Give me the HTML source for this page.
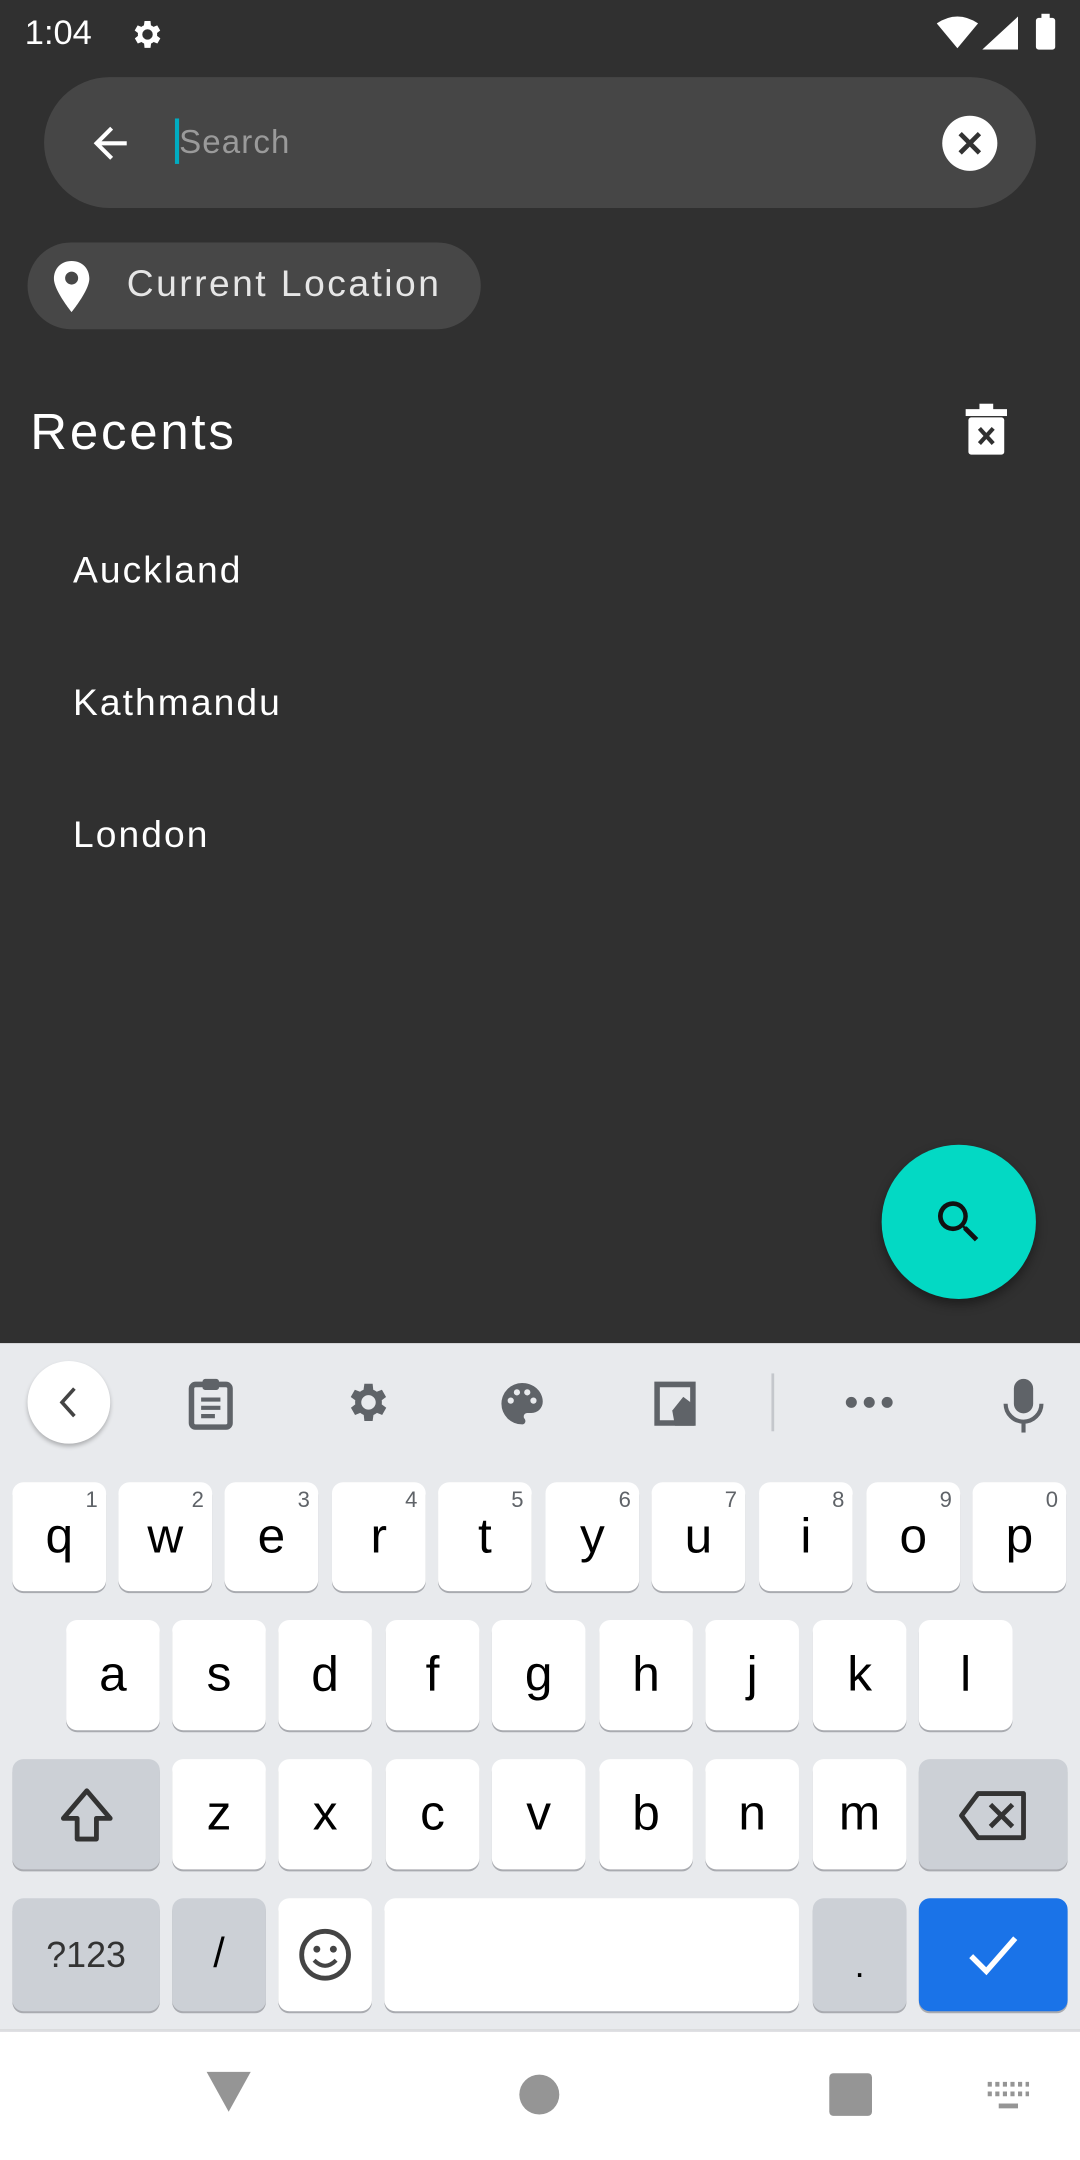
<!DOCTYPE html>
<html><head><meta charset="utf-8"><style>
*{margin:0;padding:0;box-sizing:border-box}
html,body{width:1080px;height:2160px;overflow:hidden;background:#303030}
#s{position:absolute;left:0;top:0;width:784px;height:1568px;transform:scale(1.377551);transform-origin:0 0;font-family:"Liberation Sans",sans-serif;background:#303030}
.a{position:absolute}
.k{position:absolute;background:#fff;border-radius:8px;box-shadow:0 1.5px 0 #a9abb0;font-size:36px;color:#000;text-align:center;line-height:78px}
.k sup{position:absolute;right:6px;top:6px;font-size:16px;color:#5f6368;line-height:16px}
.g{background:#ccd0d6}
.it{position:absolute;left:53px;font-size:27px;letter-spacing:1.5px;color:#fff}
</style></head><body><div id="s">
<div class="a" style="left:18px;top:10px;font-size:25px;color:#fff">1:04</div>
<svg class="a" style="left:93px;top:12px" width="26" height="26" viewBox="0 0 24 24"><path fill="#fff" d="M19.4 13a7.5 7.5 0 0 0 0-2l2.1-1.6-2-3.5-2.5 1a7 7 0 0 0-1.7-1L15 3h-4l-.4 2.9a7 7 0 0 0-1.7 1l-2.5-1-2 3.5L6.6 11a7.5 7.5 0 0 0 0 2l-2.1 1.6 2 3.5 2.5-1a7 7 0 0 0 1.7 1L11 21h4l.4-2.9a7 7 0 0 0 1.7-1l2.5 1 2-3.5zM13 15.5a3.5 3.5 0 1 1 0-7 3.5 3.5 0 0 1 0 7z"/></svg>
<svg class="a" style="left:680px;top:12px" width="30" height="24" viewBox="0 0 30 24"><path fill="#fff" d="M0 5Q15-5 30 5L15 23z"/></svg>
<svg class="a" style="left:713px;top:12px" width="26" height="24"><path fill="#fff" d="M26 0V24H0z"/></svg>
<div class="a" style="left:752px;top:13px;width:14px;height:23px;background:#fff;border-radius:2px"></div>
<div class="a" style="left:756px;top:10px;width:6px;height:4px;background:#fff"></div>
<div class="a" style="left:32px;top:56px;width:720px;height:95px;border-radius:48px;background:#464646"></div>
<svg class="a" style="left:62px;top:86px" width="36" height="36" viewBox="0 0 24 24"><path fill="#fff" d="M20 11H7.8l5.6-5.6L12 4l-8 8 8 8 1.4-1.4L7.8 13H20z"/></svg>
<div class="a" style="left:127px;top:86px;width:3px;height:33px;background:#00acc1"></div>
<div class="a" style="left:130px;top:90px;font-size:24px;letter-spacing:0.8px;color:#9a9a9a">Search</div>
<div class="a" style="left:684px;top:84px;width:40px;height:40px;border-radius:50%;background:#fff"></div>
<svg class="a" style="left:692px;top:92px" width="24" height="24" viewBox="0 0 24 24"><path stroke="#333" stroke-width="3.4" d="M5 5L19 19M19 5L5 19"/></svg>
<div class="a" style="left:20px;top:176px;width:329px;height:63px;border-radius:32px;background:#474747"></div>
<svg class="a" style="left:34px;top:188px" width="36" height="40" viewBox="0 0 24 28"><path fill="#fff" d="M12 1C6.5 1 3 5 3 10c0 6 9 17 9 17s9-11 9-17c0-5-3.5-9-9-9zm0 12a3.3 3.3 0 1 1 0-6.6 3.3 3.3 0 0 1 0 6.6z"/></svg>
<div class="a" style="left:92px;top:191px;font-size:27px;letter-spacing:1.8px;color:#e6e6e6">Current Location</div>
<div class="a" style="left:22px;top:293px;font-size:37px;letter-spacing:2px;color:#fff">Recents</div>
<svg class="a" style="left:700px;top:293px" width="32" height="38" viewBox="0 0 32 38"><rect x="1" y="4" width="30" height="5" fill="#fff"/><rect x="11" y="0" width="10" height="5" fill="#fff"/><rect x="3" y="10" width="26" height="27" rx="2" fill="#fff"/><path stroke="#303030" stroke-width="3" d="M11 18l10 11M21 18L11 29"/></svg>
<div class="it" style="top:399px">Auckland</div>
<div class="it" style="top:495px">Kathmandu</div>
<div class="it" style="top:591px">London</div>
<div class="a" style="left:640px;top:831px;width:112px;height:112px;border-radius:50%;background:#03d9c4;box-shadow:0 4px 8px rgba(0,0,0,.4)"></div>
<svg class="a" style="left:676px;top:867px" width="40" height="40" viewBox="0 0 24 24"><path fill="#111" d="M15.5 14h-.8l-.3-.3A6.5 6.5 0 1 0 9.5 16a6.5 6.5 0 0 0 4.2-1.6l.3.3v.8l5 5 1.5-1.5zm-6 0a4.5 4.5 0 1 1 0-9 4.5 4.5 0 0 1 0 9z"/></svg>
<div class="a" style="left:0;top:975px;width:784px;height:498px;background:#e8eaed"></div>
<div class="a" style="left:20px;top:988px;width:60px;height:60px;border-radius:50%;background:#fff;box-shadow:0 2px 3px rgba(0,0,0,.25)"></div>
<svg class="a" style="left:38px;top:1004px" width="24" height="28"><path d="M16 4L7 14l9 10" stroke="#444" stroke-width="2.6" fill="none"/></svg>
<svg class="a" style="left:136px;top:1000px" width="34" height="38" viewBox="0 0 34 38"><rect x="3" y="5" width="28" height="31" rx="3" fill="none" stroke="#5f6368" stroke-width="4"/><rect x="11" y="1" width="12" height="8" rx="2" fill="#5f6368"/><path d="M10 16h14M10 22h14M10 28h10" stroke="#5f6368" stroke-width="3"/></svg>
<svg class="a" style="left:248px;top:1000px" width="36" height="36" viewBox="0 0 24 24"><path fill="#5f6368" d="M19.4 13a7.5 7.5 0 0 0 0-2l2.1-1.6-2-3.5-2.5 1a7 7 0 0 0-1.7-1L15 3h-4l-.4 2.9a7 7 0 0 0-1.7 1l-2.5-1-2 3.5L6.6 11a7.5 7.5 0 0 0 0 2l-2.1 1.6 2 3.5 2.5-1a7 7 0 0 0 1.7 1L11 21h4l.4-2.9a7 7 0 0 0 1.7-1l2.5 1 2-3.5zM13 15.5a3.5 3.5 0 1 1 0-7 3.5 3.5 0 0 1 0 7z"/></svg>
<svg class="a" style="left:361px;top:1001px" width="36" height="36" viewBox="0 0 24 24"><path fill="#5f6368" d="M12 2a10 10 0 0 0 0 20c1 0 1.6-.8 1.6-1.6 0-.5-.2-.8-.4-1.1-.3-.3-.4-.6-.4-1.1 0-1 .8-1.7 1.7-1.7h2A5.5 5.5 0 0 0 22 11C22 6 17.5 2 12 2zM6.5 12a1.5 1.5 0 1 1 0-3 1.5 1.5 0 0 1 0 3zm3-4a1.5 1.5 0 1 1 0-3 1.5 1.5 0 0 1 0 3zm5 0a1.5 1.5 0 1 1 0-3 1.5 1.5 0 0 1 0 3zm3 4a1.5 1.5 0 1 1 0-3 1.5 1.5 0 0 1 0 3z"/></svg>
<svg class="a" style="left:474px;top:1002px" width="34" height="34" viewBox="0 0 34 34"><path d="M3 3h26v28H3z" fill="none" stroke="#5f6368" stroke-width="4"/><path d="M14 22l8-10 8 6v15H16z" fill="#5f6368"/></svg>
<div class="a" style="left:560px;top:997px;width:1.5px;height:42px;background:#c4c7cc"></div>
<svg class="a" style="left:612px;top:1012px" width="38" height="12"><circle cx="6" cy="6" r="4" fill="#5f6368"/><circle cx="19" cy="6" r="4" fill="#5f6368"/><circle cx="32" cy="6" r="4" fill="#5f6368"/></svg>
<svg class="a" style="left:726px;top:1000px" width="34" height="40" viewBox="0 0 34 40"><rect x="10" y="1" width="14" height="25" rx="7" fill="#5f6368"/><path d="M4 19a13 13 0 0 0 26 0M17 32v8" stroke="#5f6368" stroke-width="3" fill="none"/></svg>
<div class="k" style="left:9px;top:1076px;width:68px;height:79px">q<sup>1</sup></div>
<div class="k" style="left:86px;top:1076px;width:68px;height:79px">w<sup>2</sup></div>
<div class="k" style="left:163px;top:1076px;width:68px;height:79px">e<sup>3</sup></div>
<div class="k" style="left:241px;top:1076px;width:68px;height:79px">r<sup>4</sup></div>
<div class="k" style="left:318px;top:1076px;width:68px;height:79px">t<sup>5</sup></div>
<div class="k" style="left:396px;top:1076px;width:68px;height:79px">y<sup>6</sup></div>
<div class="k" style="left:473px;top:1076px;width:68px;height:79px">u<sup>7</sup></div>
<div class="k" style="left:551px;top:1076px;width:68px;height:79px">i<sup>8</sup></div>
<div class="k" style="left:629px;top:1076px;width:68px;height:79px">o<sup>9</sup></div>
<div class="k" style="left:706px;top:1076px;width:68px;height:79px">p<sup>0</sup></div>
<div class="k" style="left:48px;top:1176px;width:68px;height:80px">a</div>
<div class="k" style="left:125px;top:1176px;width:68px;height:80px">s</div>
<div class="k" style="left:202px;top:1176px;width:68px;height:80px">d</div>
<div class="k" style="left:280px;top:1176px;width:68px;height:80px">f</div>
<div class="k" style="left:357px;top:1176px;width:68px;height:80px">g</div>
<div class="k" style="left:435px;top:1176px;width:68px;height:80px">h</div>
<div class="k" style="left:512px;top:1176px;width:68px;height:80px">j</div>
<div class="k" style="left:590px;top:1176px;width:68px;height:80px">k</div>
<div class="k" style="left:667px;top:1176px;width:68px;height:80px">l</div>
<div class="k g" style="left:9px;top:1277px;width:107px;height:80px"><svg style="margin-top:19px" width="44" height="44" viewBox="0 0 44 44"><path d="M22 4L5 24h10v15h14V24h10z" fill="none" stroke="#333" stroke-width="3.5" stroke-linejoin="round"/></svg></div>
<div class="k" style="left:125px;top:1277px;width:68px;height:80px">z</div>
<div class="k" style="left:202px;top:1277px;width:68px;height:80px">x</div>
<div class="k" style="left:280px;top:1277px;width:68px;height:80px">c</div>
<div class="k" style="left:357px;top:1277px;width:68px;height:80px">v</div>
<div class="k" style="left:435px;top:1277px;width:68px;height:80px">b</div>
<div class="k" style="left:512px;top:1277px;width:68px;height:80px">n</div>
<div class="k" style="left:590px;top:1277px;width:68px;height:80px">m</div>
<div class="k g" style="left:667px;top:1277px;width:108px;height:80px"><svg style="margin-top:22px" width="52" height="38" viewBox="0 0 52 38"><path d="M15 3h33v32H15L3 19z" fill="none" stroke="#333" stroke-width="3.5" stroke-linejoin="round"/><path d="M24 11l16 16M40 11L24 27" stroke="#333" stroke-width="3.5"/></svg></div>
<div class="k g" style="left:9px;top:1378px;width:107px;height:82px;font-size:26px;color:#333;line-height:82px">?123</div>
<div class="k g" style="left:125px;top:1378px;width:68px;height:82px;font-size:30px;line-height:82px">/</div>
<div class="k" style="left:202px;top:1378px;width:68px;height:82px"><svg style="margin-top:21px" width="40" height="40" viewBox="0 0 40 40"><circle cx="20" cy="20" r="17" fill="none" stroke="#444" stroke-width="3.5"/><circle cx="14" cy="16" r="2.5" fill="#444"/><circle cx="26" cy="16" r="2.5" fill="#444"/><path d="M12 24q8 8 16 0" fill="none" stroke="#444" stroke-width="3"/></svg></div>
<div class="k" style="left:279px;top:1378px;width:301px;height:82px"></div>
<div class="k g" style="left:590px;top:1378px;width:68px;height:82px;font-size:26px;line-height:96px">.</div>
<div class="k" style="left:667px;top:1378px;width:108px;height:82px;background:#1a73e8"><svg style="margin-top:24px" width="40" height="34"><path d="M4 18l11 11L36 5" fill="none" stroke="#fff" stroke-width="4"/></svg></div>
<div class="a" style="left:0;top:1473px;width:784px;height:95px;background:#fff;border-top:2px solid #dcdde0"></div>
<svg class="a" style="left:148px;top:1502px" width="36" height="32"><path d="M2 2h32L18 31z" fill="#959595"/></svg>
<div class="a" style="left:377px;top:1506px;width:29px;height:29px;border-radius:50%;background:#959595"></div>
<div class="a" style="left:602px;top:1505px;width:31px;height:31px;border-radius:3px;background:#959595"></div>
<svg class="a" style="left:716px;top:1510px" width="32" height="22"><path d="M1 3h30M1 10h30" stroke="#959595" stroke-width="3.5" stroke-dasharray="3 2.5"/><rect x="9" y="17" width="14" height="3.5" fill="#959595"/></svg>
</div></body></html>
